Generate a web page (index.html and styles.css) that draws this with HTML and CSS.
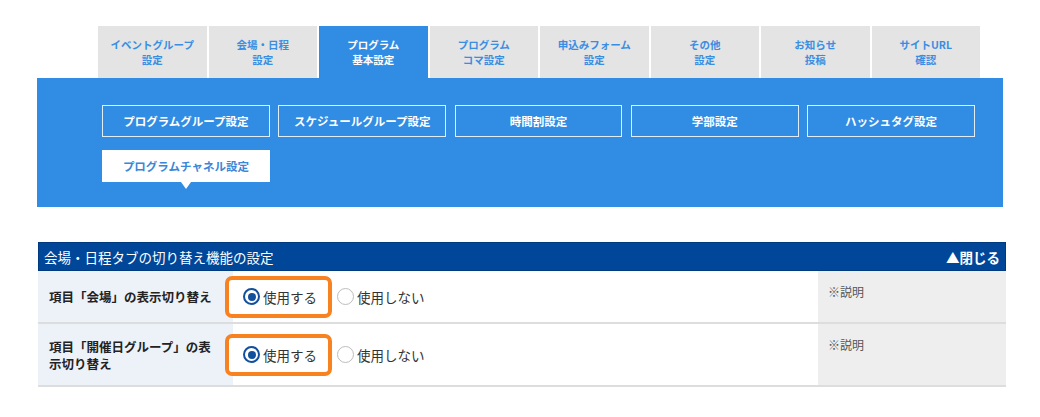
FILE: index.html
```html
<!DOCTYPE html>
<html lang="ja">
<head>
  <meta charset="UTF-8">
  <title>プログラム基本設定</title>
  <link rel="stylesheet" href="styles.css">
</head>
<body>
  <nav class="tabs">
    <a class="tab">イベントグループ<br>設定</a>
    <a class="tab">会場・日程<br>設定</a>
    <a class="tab active">プログラム<br>基本設定</a>
    <a class="tab">プログラム<br>コマ設定</a>
    <a class="tab">申込みフォーム<br>設定</a>
    <a class="tab">その他<br>設定</a>
    <a class="tab">お知らせ<br>投稿</a>
    <a class="tab">サイトURL<br>確認</a>
  </nav>

  <div class="panel">
    <div class="subnav">
      <a class="sub">プログラムグループ設定</a>
      <a class="sub">スケジュールグループ設定</a>
      <a class="sub">時間割設定</a>
      <a class="sub">学部設定</a>
      <a class="sub">ハッシュタグ設定</a>
      <a class="sub current">プログラムチャネル設定</a>
    </div>
  </div>

  <section class="box">
    <div class="box-head">
      <span>会場・日程タブの切り替え機能の設定</span>
      <span class="toggle">▲閉じる</span>
    </div>

    <div class="row">
      <div class="label">項目「会場」の表示切り替え</div>
      <div class="value">
        <label class="opt hl"><span class="radio on"></span>使用する</label>
        <label class="opt"><span class="radio"></span>使用しない</label>
      </div>
      <div class="note">※説明</div>
    </div>

    <div class="row tall">
      <div class="label">項目「開催日グループ」の表示切り替え</div>
      <div class="value">
        <label class="opt hl"><span class="radio on"></span>使用する</label>
        <label class="opt"><span class="radio"></span>使用しない</label>
      </div>
      <div class="note">※説明</div>
    </div>
  </section>
</body>
</html>
```

FILE: styles.css
```css
body {
  margin: 0;
  padding-top: 26px;
  background: #fff;
  color: #333;
  font-family: "Noto Sans CJK JP", "Noto Sans", sans-serif;
}

/* main tabs */
.tabs { display: flex; gap: 2px; width: 882px; margin-left: 98px; }
.tab {
  flex: 1;
  height: 52px;
  display: flex;
  align-items: center;
  justify-content: center;
  text-align: center;
  background: #e4e4e4;
  color: #3a8ee2;
  font-size: 10.5px;
  font-weight: bold;
  line-height: 15px;
}
.tab.active { background: #318ce3; color: #fff; }

/* blue sub panel */
.panel {
  margin-left: 37px;
  width: 966px;
  background: #318ce3;
  padding: 27px 28px 25px 65px;
  box-sizing: border-box;
}
.subnav { display: grid; grid-template-columns: repeat(5, 1fr); gap: 13px 8.5px; }
.sub {
  position: relative;
  height: 32px;
  display: flex;
  align-items: center;
  justify-content: center;
  border: 1px solid rgba(255, 255, 255, 0.85);
  box-sizing: border-box;
  color: #fff;
  font-size: 11.5px;
  font-weight: bold;
}
.sub.current { background: #fff; color: #3a86d8; }
.sub.current::after {
  content: "";
  position: absolute;
  left: 50%;
  top: 100%;
  margin: 1px 0 0 -5px;
  border-left: 5px solid transparent;
  border-right: 5px solid transparent;
  border-top: 7px solid #fff;
}

/* settings box */
.box { margin: 35px 0 0 38px; width: 968px; }
.box-head {
  display: flex;
  justify-content: space-between;
  align-items: center;
  height: 27px;
  padding: 0 5px;
  background: #00479a;
  border: 1px solid #003a7e;
  color: #fff;
  font-size: 13.5px;
}
.toggle { font-weight: bold; }

.row { display: flex; min-height: 51px; border-bottom: 2px solid #dddddd; }
.row.tall { min-height: 61px; }
.label {
  width: 195px;
  box-sizing: border-box;
  padding: 0 12px 0 11px;
  display: flex;
  align-items: center;
  background: #edf1f8;
  font-size: 12.5px;
  font-weight: bold;
  line-height: 17px;
  color: #222;
}
.value { flex: 1; display: flex; align-items: center; padding: 0 10px; }
.note {
  width: 188px;
  box-sizing: border-box;
  padding: 12px 10px;
  background: #eeeeee;
  color: #555;
  font-size: 12px;
}

.opt { display: inline-flex; align-items: center; font-size: 13.5px; color: #333; }
.opt.hl {
  margin: 0 5px 0 -18px;
  padding: 0 11px 0 14px;
  height: 34px;
  border: 4px solid #f7821f;
  border-radius: 7px;
  background: #fff;
}
.radio {
  width: 17px;
  height: 17px;
  box-sizing: border-box;
  border: 1.5px solid #bdbdbd;
  border-radius: 50%;
  margin-right: 3px;
  position: relative;
}
.radio.on { border: 2px solid #124f9c; }
.radio.on::after {
  content: "";
  position: absolute;
  left: 2.5px;
  top: 2.5px;
  width: 8px;
  height: 8px;
  border-radius: 50%;
  background: #124f9c;
}
```
